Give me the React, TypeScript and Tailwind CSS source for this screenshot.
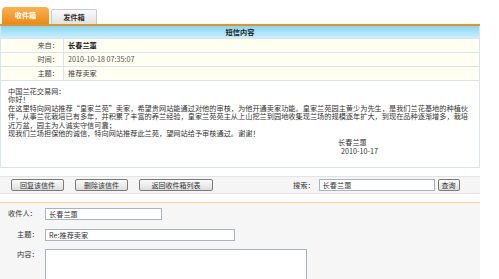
const font = '[font-family:"Noto_Sans_CJK_SC","Liberation_Sans",sans-serif]'

const lines = [
  '中国兰花交易网：',
  '你好！',
  '在这里特向网站推荐“皇家兰苑”卖家，希望贵网站能通过对他的审核，为他开通卖家功能。皇家兰苑园主黄少为先生，是我们兰花基地的种植伙',
  '伴，从事兰花栽培已有多年，并积累了丰富的养兰经验，皇家兰苑苑主从上山挖兰到园地收集现兰场的规模逐年扩大，到现在品种逐渐增多，栽培',
  '近万盆，园主为人诚实守信可靠；',
  '现我们兰场担保他的诚信，特向网站推荐此兰苑，望网站给予审核通过。谢谢！',
]

function InfoRow({ label, children }: { label: string; children: React.ReactNode }) {
  return (
    <div className="flex h-[14px] border-b border-[#d9e5ec] bg-[#fffff2]">
      <div className="w-[63px] border-r border-[#d9e5ec] pr-[4px] text-right leading-[13px] text-[#444]">{label}</div>
      <div className="pl-[4px] leading-[13px]">{children}</div>
    </div>
  )
}

function Btn({ children, w }: { children: React.ReactNode; w: string }) {
  return (
    <button className={`${w} h-[12px] rounded-[2px] border border-[#7a7a7a] bg-gradient-to-b from-[#fbfbfb] to-[#dedede] text-[7px] leading-[10px] text-[#333]`}>
      {children}
    </button>
  )
}

export default function App() {
  return (
    <div className={`w-[499px] h-[279px] overflow-hidden bg-white text-[7.2px] text-[#333] ${font}`}>
      <div className="w-[480px]">
        {/* tabs */}
        <div className="flex h-[24px] items-end gap-[2px] pl-[2px]">
          <div className="flex h-[17px] w-[47px] items-center justify-center rounded-t-[4px] bg-gradient-to-b from-[#fbb24c] to-[#ea8a12] font-bold text-white">
            收件箱
          </div>
          <div className="flex h-[15px] w-[46px] items-center justify-center rounded-t-[2px] border border-b-0 border-[#c9c9c9] bg-gradient-to-b from-[#fafafa] to-[#e2e2e2] font-bold text-[#333]">
            发件箱
          </div>
        </div>
        <div className="h-[2px] bg-[#e8921e]" />

        {/* message */}
        <div className="border-x border-[#d9e5ec]">
          <div className="h-[13px] border-b border-[#d9e5ec] bg-gradient-to-b from-[#84d6f4] to-[#cdeffb] text-center font-bold leading-[12px] text-[#222]">
            短信内容
          </div>
          <InfoRow label="来自：">
            <span className="font-bold text-[#222]">长春兰蕙</span>
          </InfoRow>
          <InfoRow label="时间：">
            <span className="text-[#555]">2010-10-18 07:35:07</span>
          </InfoRow>
          <InfoRow label="主题：">
            <span className="text-[#444]">推荐卖家</span>
          </InfoRow>
          <div className="h-[87px] border-b border-[#d9e5ec] pl-[7px] pt-[6px] leading-[8.4px] text-[#333]">
            {lines.map((l, i) => (
              <div key={i} className="whitespace-nowrap">{l}</div>
            ))}
            <div className="ml-[330px] mt-[1px] leading-[9px]">
              <div>长春兰蕙</div>
              <div className="pl-[3px]">2010-10-17</div>
            </div>
          </div>
        </div>

        {/* toolbar */}
        <div className="mt-[8px] flex h-[18px] items-center border-y border-[#e4e4e4] bg-[#f5f5f5] pl-[11px]">
          <div className="flex gap-[11px]">
            <Btn w="w-[53px]">回复该信件</Btn>
            <Btn w="w-[53px]">删除该信件</Btn>
            <Btn w="w-[74px]">返回收件箱列表</Btn>
          </div>
          <span className="ml-[80px] text-[#333]">搜索：</span>
          <div className="ml-[4px] h-[12px] w-[116px] border border-[#a9b4bc] bg-white pl-[3px] leading-[10px]">长春兰蕙</div>
          <Btn w="ml-[3px] w-[22px]">查询</Btn>
        </div>

        {/* reply form */}
        <div className="mt-[8px] h-[80px] border-t border-[#f0d69c] bg-[#f6f6f6] pt-[4px]">
          <div className="flex h-[13px] items-center">
            <span className="w-[45px] pl-[8px]">收件人：</span>
            <div className="h-[12px] w-[117px] border border-[#a9b4bc] bg-white pl-[3px] leading-[10px]">长春兰蕙</div>
          </div>
          <div className="mt-[8px] flex h-[13px] items-center">
            <span className="w-[45px] pl-[17px]">主题：</span>
            <div className="h-[12px] w-[190px] border border-[#a9b4bc] bg-white pl-[3px] leading-[10px]">Re:推荐卖家</div>
          </div>
          <div className="mt-[8px] flex items-start">
            <span className="w-[45px] pl-[17px] leading-[10px]">内容：</span>
            <div className="h-[40px] w-[262px] border border-[#a9b4bc] bg-white" />
          </div>
        </div>
      </div>
    </div>
  )
}
